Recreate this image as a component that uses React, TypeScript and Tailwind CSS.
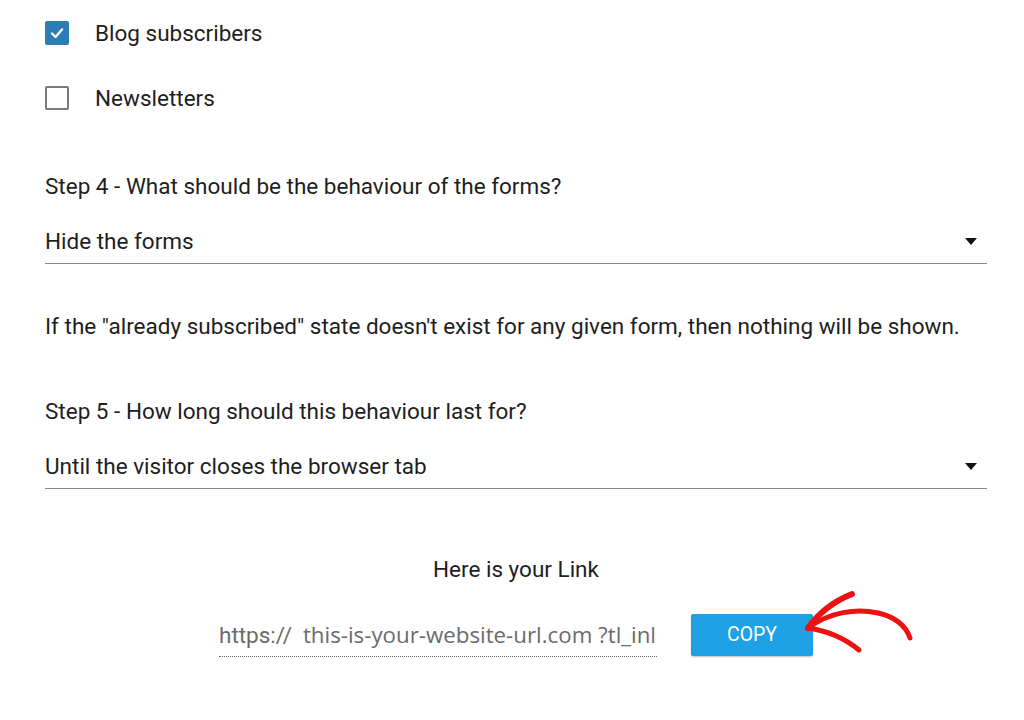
import React from "react";

const Caret = () => (
  <svg width="12" height="8" viewBox="0 0 12 8" className="absolute right-[10px] top-[9px]">
    <path d="M0 0 L12 0 L6 7 Z" fill="#111" />
  </svg>
);

export default function App() {
  return (
    <div className="relative w-[1024px] h-[720px] bg-white overflow-hidden text-[#1e1e1e] text-[22.5px] leading-6" style={{ fontFamily: "Roboto, 'Liberation Sans', sans-serif" }}>
      <div className="w-[987px] pl-[45px] pt-[21px]">
        <div className="flex items-center h-6">
          <div className="w-6 h-6 rounded-[2px] bg-[#2b7db4] flex items-center justify-center">
            <svg width="16" height="16" viewBox="0 0 16 16">
              <path d="M3 8.5 L6.5 12 L13 4.5" fill="none" stroke="#fff" strokeWidth="2.4" strokeLinecap="round" strokeLinejoin="round" />
            </svg>
          </div>
          <span className="ml-[26px]">Blog subscribers</span>
        </div>
        <div className="flex items-center h-6 mt-[41px]">
          <div className="w-6 h-6 rounded-[2px] border-2 border-[#7a7a7a] bg-white" />
          <span className="ml-[26px]">Newsletters</span>
        </div>

        <div className="mt-[64px]">Step 4 - What should be the behaviour of the forms?</div>
        <div className="relative mt-[31px] pb-[10px] border-b border-[#8a8a8a]">
          Hide the forms
          <Caret />
        </div>

        <div className="mt-[50px] whitespace-nowrap">If the "already subscribed" state doesn't exist for any given form, then nothing will be shown.</div>

        <div className="mt-[61px]">Step 5 - How long should this behaviour last for?</div>
        <div className="relative mt-[31px] pb-[10px] border-b border-[#8a8a8a]">
          Until the visitor closes the browser tab
          <Caret />
        </div>

        <div className="mt-[68px] text-center">Here is your Link</div>

        <div className="mt-[32px] flex justify-center items-center">
          <div className="w-[438px] h-[44px] flex items-center border-b border-dotted border-[#666] overflow-hidden whitespace-nowrap pt-[1px] text-[#6b6b6b]">
            <span>https://</span>
            <span className="ml-[11px] text-[22.3px]" style={{ fontFamily: "'Open Sans', 'Noto Sans', sans-serif" }}>this-is-your-website-url.com ?tl_inl</span>
          </div>
          <button className="ml-[34px] w-[122px] h-[42px] rounded-[2px] bg-[#1fa1e6] text-white text-[19.5px] shadow-[0_1px_2px_rgba(0,0,0,0.25)]">
            COPY
          </button>
        </div>
      </div>

      <svg className="absolute left-0 top-0" width="1024" height="720" viewBox="0 0 1024 720">
        <g fill="none" stroke="#ee1111" strokeLinecap="round" strokeLinejoin="round">
          <path d="M808 628 C818 614, 832 602, 852 594" strokeWidth="6" />
          <path d="M808 628 C830 612, 856 608, 878 613 C895 617, 906 626, 910 638" strokeWidth="5" />
          <path d="M808 628 C822 630, 842 636, 859 650" strokeWidth="5" />
        </g>
      </svg>
    </div>
  );
}
